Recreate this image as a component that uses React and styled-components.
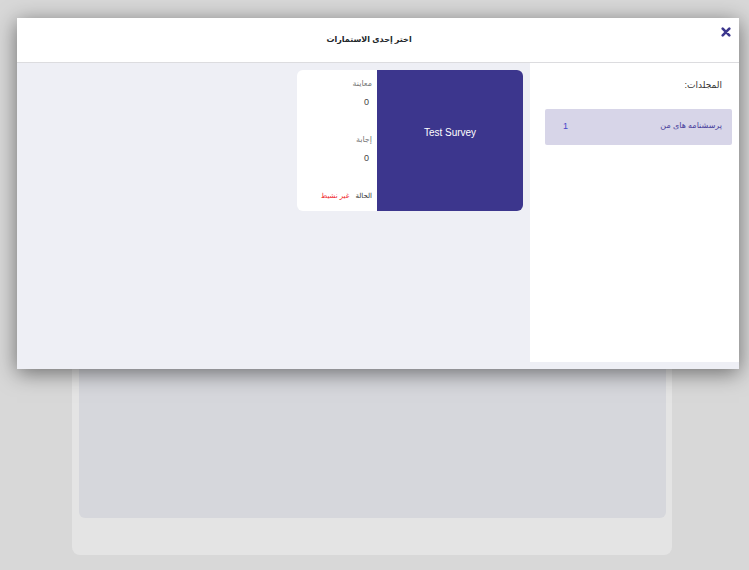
import React from "react";
import styled, { createGlobalStyle } from "styled-components";

const GlobalStyle = createGlobalStyle`
  * { box-sizing: border-box; }
  body {
    margin: 0;
    background: #d8d8d8;
    color: #333;
    font-family: "Liberation Sans", "DejaVu Sans", Arial, sans-serif;
    font-size: 8px;
  }
  h1, h2, p, dl, dd, ul { margin: 0; padding: 0; }
`;

const Page = styled.div`
  position: relative;
  min-height: 100vh;
  display: flex;
  padding: 30px 77px 15px 72px;
`;

const Panel = styled.main`
  flex: 1;
  display: flex;
  padding: 7px 6px 37px 7px;
  border-radius: 8px;
  background: #e4e4e4;
`;

const PanelBody = styled.div`
  flex: 1;
  border-radius: 6px;
  background: #d6d7dc;
`;

const Dialog = styled.section`
  position: absolute;
  inset: 18px 10px auto 17px;
  padding-bottom: 7px;
  background: #eeeff5;
  box-shadow: 0 4px 20px rgba(0, 0, 0, 0.5);
`;

const DialogHeader = styled.header`
  display: grid;
  grid-template-columns: 26px 1fr 8px;
  height: 45px;
  background: #fff;
  border-bottom: 1px solid #dcdcdf;
`;

const Title = styled.h1`
  font-size: 8px;
  line-height: 44px;
  font-weight: bold;
  text-align: center;
  color: #212529;
`;

const CloseButton = styled.button`
  display: grid;
  place-items: center;
  width: 26px;
  height: 28px;
  padding: 0;
  border: 0;
  background: none;
  color: #3c368d;
  cursor: pointer;
`;

const Content = styled.div`
  display: flex;
  min-height: 299px;
`;

const Sidebar = styled.aside`
  flex: 0 0 209px;
  padding: 12px 7px 12px 15px;
  background: #fff;
`;

const SidebarTitle = styled.h2`
  padding: 0 10px;
  font-size: 9px;
  line-height: 20px;
  font-weight: normal;
  color: #333;
`;

const FolderList = styled.ul`
  padding-top: 14px;
  list-style: none;
`;

const FolderButton = styled.button`
  display: flex;
  justify-content: space-between;
  width: 100%;
  height: 36px;
  padding: 8px 10px 0 18px;
  border: 0;
  border-radius: 2px;
  background: #d7d5e8;
  color: #4a3f9c;
  font: inherit;
  line-height: 18px;
  cursor: pointer;
`;

const Count = styled.span`
  font-size: 9px;
  color: #4646c8;
`;

const Surveys = styled.div`
  flex: 1;
  padding: 7px;
`;

const Card = styled.article`
  display: flex;
  width: 226px;
  height: 141px;
  overflow: hidden;
  border-radius: 6px;
  background: #fff;
`;

const CardLink = styled.a`
  flex: 0 0 146px;
  padding-top: 54px;
  background: #3c368d;
  color: #fff;
  font-size: 10px;
  line-height: 18px;
  text-align: center;
  text-decoration: none;
`;

const Stats = styled.dl`
  flex: 1;
  padding: 5px 5px 0 0;
  line-height: 18px;
`;

const Stat = styled.div`
  height: 56px;
  color: #777;

  dd {
    padding-right: 3px;
    font-size: 9px;
    color: #444;
  }
`;

const Status = styled.div`
  display: flex;
  gap: 6px;
  font-size: 7px;
  white-space: nowrap;

  dd { color: #f01e2d; }
`;

const stats = [
  { label: "معاينة", value: 0 },
  { label: "إجابة", value: 0 },
];

export default function App() {
  return (
    <>
      <GlobalStyle />
      <Page lang="ar" dir="rtl">
        <Panel>
          <PanelBody />
        </Panel>
        <Dialog role="dialog" aria-labelledby="dialog-title">
          <DialogHeader>
            <CloseButton type="button" aria-label="إغلاق">
              <svg width="10" height="10" viewBox="0 0 10 10" aria-hidden="true">
                <path d="M1.7 1.7 8.3 8.3M8.3 1.7 1.7 8.3" stroke="currentColor" strokeWidth="2.6" strokeLinecap="round" />
              </svg>
            </CloseButton>
            <Title id="dialog-title">اختر إحدى الاستمارات</Title>
          </DialogHeader>
          <Content>
            <Sidebar>
              <SidebarTitle>المجلدات:</SidebarTitle>
              <FolderList>
                <li>
                  <FolderButton type="button">
                    <span lang="fa">پرسشنامه های من</span>
                    <Count>1</Count>
                  </FolderButton>
                </li>
              </FolderList>
            </Sidebar>
            <Surveys>
              <Card>
                <CardLink href="#survey" dir="ltr">Test Survey</CardLink>
                <Stats>
                  {stats.map((stat) => (
                    <Stat key={stat.label}>
                      <dt>{stat.label}</dt>
                      <dd>{stat.value}</dd>
                    </Stat>
                  ))}
                  <Status>
                    <dt>الحالة</dt>
                    <dd>غير نشيط</dd>
                  </Status>
                </Stats>
              </Card>
            </Surveys>
          </Content>
        </Dialog>
      </Page>
    </>
  );
}
